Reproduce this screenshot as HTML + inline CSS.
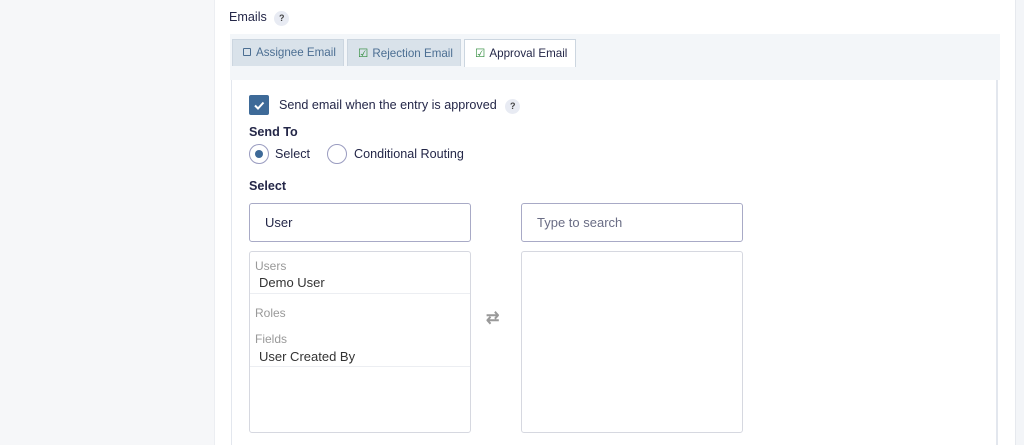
<!DOCTYPE html>
<html><head><style>
*{box-sizing:border-box;margin:0;padding:0}
body{width:1024px;height:445px;overflow:hidden;background:#f6f7f9;font-family:"Liberation Sans",sans-serif;color:#242748;position:relative;font-size:12.6px}
.a{position:absolute}
.q{display:inline-block;width:15px;height:15px;border-radius:50%;background:#e8ebf3;font-size:9px;font-weight:bold;text-align:center;line-height:15px;color:#444}
.tab{position:absolute;top:39px;height:27px;background:#d9e2ea;border:1px solid #ccd6e0;border-bottom:none;font-size:11.6px;color:#4b6e92;padding:6px 0 0 10px}
.in{position:absolute;height:39px;border:1px solid #a8aac6;border-radius:3px;background:#fff;font-size:13px;padding:11px 0 0 15px}
.lb{position:absolute;border:1px solid #d6d8e0;border-radius:3px;background:#fff}
.g{position:absolute;left:5px;font-size:12px;color:#999}
.it{position:absolute;left:9px;font-size:13px;color:#333}
.ln{position:absolute;left:0;right:0;height:1px;background:#eceef2}
</style></head><body>
<div class="a" style="left:214px;top:0;width:801px;height:445px;background:#fff;border-left:1px solid #eceef2"></div>
<div class="a" style="left:1015px;top:0;width:9px;height:445px;background:#f3f5f8;border-left:1px solid #e6e9ee"></div>
<div class="a" style="left:229px;top:10px;font-size:12.6px">Emails <span class="q" style="margin-left:4px">?</span></div>
<div class="a" style="left:230px;top:34px;width:770px;height:46px;background:#f3f6f9"></div>
<div class="tab" style="left:232px;width:112px"><span style="display:inline-block;width:8px;height:8px;border:1px solid #4b6e92;border-radius:1px;margin-right:5px"></span>Assignee Email</div>
<div class="tab" style="left:347px;width:114px"><span style="color:#2e8b3a;margin-right:4px">☑</span>Rejection Email</div>
<div class="tab" style="left:464px;width:112px;background:#fff;color:#242748;height:28px"><span style="color:#2e8b3a;margin-right:4px">☑</span>Approval Email</div>
<div class="a" style="left:231px;top:80px;width:767px;height:365px;background:#fff;border-left:1px solid #e3e7ee;border-right:2px solid #e3e7ee"></div>
<div class="a" style="left:249px;top:95px;width:20px;height:20px;background:#3e6a98;border-radius:2px"><svg width="20" height="20"><path d="M6 10.5l3 3 5.5-6" stroke="#fff" stroke-width="2" fill="none"/></svg></div>
<div class="a" style="left:279px;top:98px">Send email when the entry is approved <span class="q" style="margin-left:5px">?</span></div>
<div class="a" style="left:249px;top:125px;font-weight:bold">Send To</div>
<div class="a" style="left:249px;top:144px;width:20px;height:20px;border:1px solid #9a9cc0;border-radius:50%"><div style="margin:5px;width:8px;height:8px;border-radius:50%;background:#3e6a98"></div></div>
<div class="a" style="left:275px;top:147px">Select</div>
<div class="a" style="left:327px;top:144px;width:20px;height:20px;border:1px solid #9a9cc0;border-radius:50%"></div>
<div class="a" style="left:354px;top:147px">Conditional Routing</div>
<div class="a" style="left:249px;top:179px;font-weight:bold">Select</div>
<div class="in" style="left:249px;top:203px;width:222px">User</div>
<div class="in" style="left:521px;top:203px;width:222px;color:#6a6d85">Type to search</div>
<div class="lb" style="left:249px;top:251px;width:222px;height:182px">
<div class="g" style="top:7px">Users</div><div class="it" style="top:23px">Demo User</div><div class="ln" style="top:41px"></div>
<div class="g" style="top:54px">Roles</div>
<div class="g" style="top:80px">Fields</div><div class="it" style="top:97px">User Created By</div><div class="ln" style="top:114px"></div>
</div>
<div class="a" style="left:486px;top:308px;color:#999;font-size:16px;font-weight:bold">⇄</div>
<div class="lb" style="left:521px;top:251px;width:222px;height:182px"></div>
</body></html>
